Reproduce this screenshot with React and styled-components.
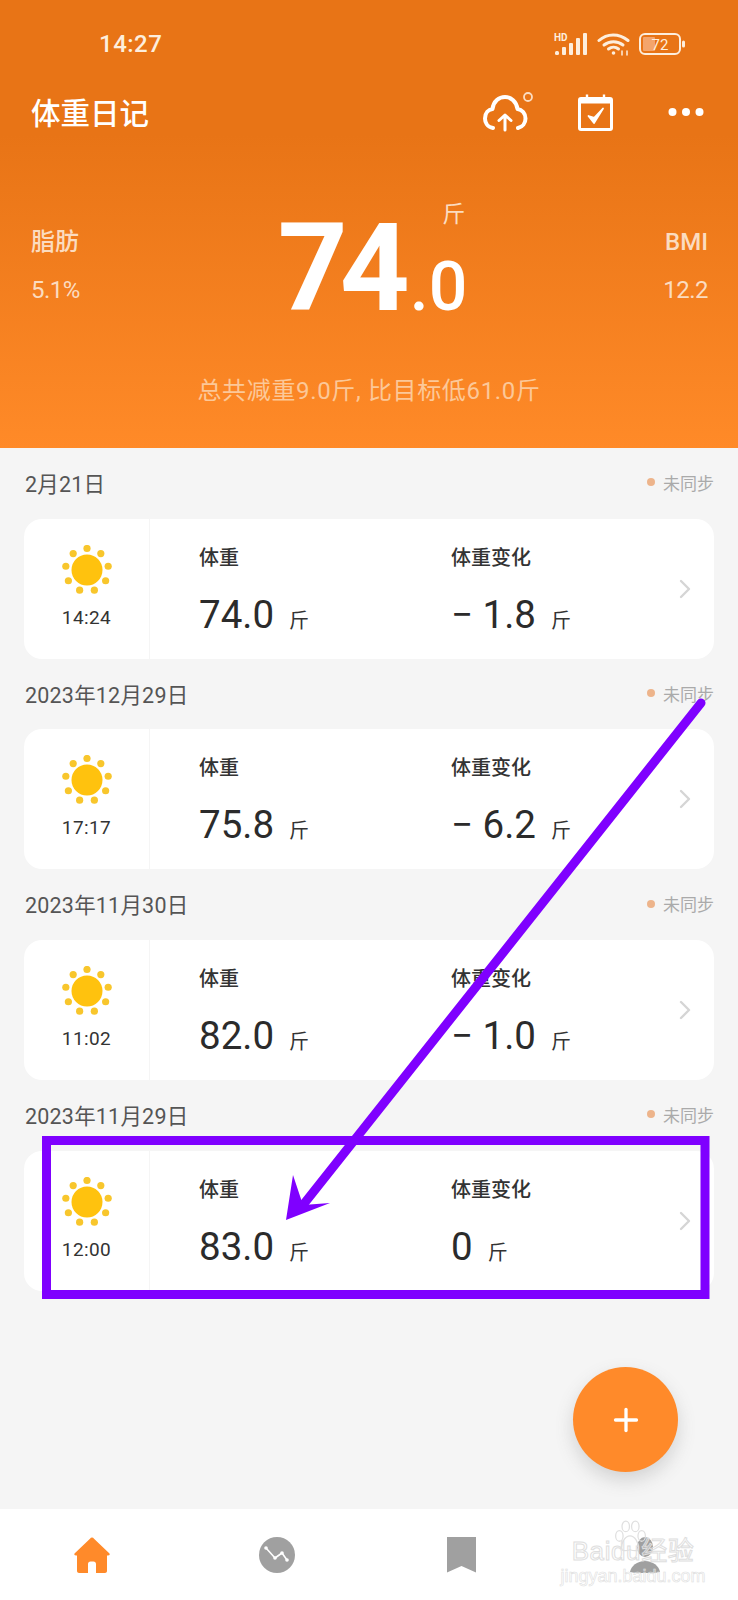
import React from "react";
import styled, { createGlobalStyle } from "styled-components";
import { Plus, ChevronRight } from "lucide-react";

const CJK = `Roboto, "Noto Sans CJK SC", sans-serif`;

const GlobalStyle = createGlobalStyle`
  html, body {
    margin: 0;
    padding: 0;
    background: #f5f5f5;
    font-family: ${CJK};
  }
  * { box-sizing: border-box; }
`;

const Page = styled.div`
  position: relative;
  width: 738px;
  height: 1600px;
  overflow: hidden;
  display: flex;
  flex-direction: column;
  background: #f5f5f5;
`;

/* orange header */
const Header = styled.header`
  height: 448px;
  flex: none;
  display: flex;
  flex-direction: column;
  background: linear-gradient(180deg, #e87416 0%, #e87416 30%, #ff8a28 100%);
  color: #fff;
`;

const StatusBar = styled.div`
  height: 88px;
  display: flex;
  align-items: center;
  justify-content: space-between;
  padding: 0 52px 0 99px;
`;

const Clock = styled.span`
  font-size: 24px;
  font-weight: 500;
  letter-spacing: 0.5px;
  color: #fdeedd;
`;

const StatusIcons = styled.div`
  display: flex;
  align-items: center;
  gap: 9px;
`;

const TopBar = styled.div`
  height: 48px;
  display: flex;
  align-items: center;
  padding: 0 34px 0 31px;
`;

const AppTitle = styled.h1`
  margin: -3px 0 0;
  flex: 1;
  font-size: 29.5px;
  font-weight: 500;
  color: #fff;
`;

const TopIcons = styled.div`
  display: flex;
  align-items: center;
  gap: 45px;
`;

const DotsSvg = styled.svg`
  margin-left: 10px;
`;

const Stats = styled.div`
  height: 204px;
  padding: 66px 30px 0 31px;
  display: flex;
  justify-content: space-between;
  align-items: flex-start;
`;

const SideStat = styled.div`
  padding-top: 26px;
  display: flex;
  flex-direction: column;
  gap: 21px;
  align-items: ${(p) => (p.$right ? "flex-end" : "flex-start")};
  color: #fbdcc0;
`;

const SideLabel = styled.span`
  font-size: 24px;
  line-height: 28px;
  font-weight: 500;
`;

const SideValue = styled.span`
  font-size: 24px;
  line-height: 26px;
  letter-spacing: -0.5px;
`;

const Big = styled.div`
  display: flex;
  flex-direction: column;
  margin-left: 2px;
`;

const BigUnit = styled.span`
  align-self: flex-end;
  margin-right: 2px;
  font-size: 23px;
  line-height: 26px;
  color: #fbdcc0;
`;

const BigNumber = styled.div`
  margin-top: -24px;
  font-size: 122px;
  line-height: 130px;
  font-weight: 700;
  letter-spacing: -8px;
  white-space: nowrap;
`;

const BigDecimal = styled.span`
  font-size: 68px;
  font-weight: 500;
  letter-spacing: 0;
  margin-left: 8px;
`;

const Summary = styled.div`
  text-align: center;
  font-size: 24px;
  line-height: 30px;
  letter-spacing: 0.65px;
  color: #fcc898;
  margin-top: 36px;
`;

/* day list */
const List = styled.main`
  flex: 1;
  padding: 0 24px;
`;

const DateRow = styled.div`
  height: 70.7px;
  padding-bottom: 2px;
  display: flex;
  align-items: center;
  justify-content: space-between;
`;

const DateText = styled.span`
  margin-left: 1px;
  font-size: 21.5px;
  letter-spacing: 0.2px;
  color: #555;
`;

const SyncState = styled.span`
  display: flex;
  align-items: center;
  gap: 8px;
  font-size: 17px;
  color: #aaa;
`;

const SyncDot = styled.i`
  width: 8px;
  height: 8px;
  border-radius: 50%;
  background: #edb48b;
`;

const Card = styled.div`
  position: relative;
  height: 140px;
  display: flex;
  background: #fff;
  border-radius: 18px;
`;

const TimeCell = styled.div`
  width: 126px;
  flex: none;
  padding-top: 26px;
  display: flex;
  flex-direction: column;
  align-items: center;
  border-right: 1px solid #f5f5f5;
`;

const TimeText = styled.span`
  margin-top: 11px;
  font-size: 19px;
  line-height: 24px;
  letter-spacing: 0.4px;
  color: #333;
`;

const Metric = styled.div`
  width: ${(p) => p.$width}px;
  padding: 25px 0 0 ${(p) => p.$inset}px;
`;

const MetricLabel = styled.div`
  font-size: 20px;
  line-height: 28px;
  font-weight: 500;
  color: #333;
`;

const MetricValue = styled.div`
  margin-top: 18px;
  display: flex;
  align-items: baseline;
  font-size: 38.5px;
  line-height: 50px;
  color: #2b2b2b;
`;

const MetricUnit = styled.span`
  margin-left: 15px;
  font-size: 20px;
  color: #333;
`;

const Chevron = styled(ChevronRight)`
  position: absolute;
  right: 13px;
  top: 54px;
  color: #d5d5d5;
`;

/* overlays */
const Fab = styled.button`
  position: absolute;
  left: 573px;
  top: 1367px;
  width: 105px;
  height: 105px;
  border: none;
  border-radius: 50%;
  padding: 0;
  display: flex;
  align-items: center;
  justify-content: center;
  color: #fff;
  background: #ff8a2a;
  box-shadow: 0 8px 18px rgba(90, 90, 90, 0.22);
`;

const Annotation = styled.svg`
  position: absolute;
  left: 0;
  top: 0;
  pointer-events: none;
`;

const BottomNav = styled.nav`
  height: 91px;
  flex: none;
  display: grid;
  grid-template-columns: repeat(4, 1fr);
  align-items: start;
  justify-items: center;
  padding-top: 28px;
  background: #fff;
`;

const Watermark = styled.div`
  position: absolute;
  left: 566px;
  top: 1518px;
  width: 134px;
  display: flex;
  flex-direction: column;
  align-items: center;
  color: rgba(255, 255, 255, 0.25);
  pointer-events: none;
  font-family: "Liberation Sans", "Noto Sans CJK SC", sans-serif;
  -webkit-text-stroke: 1px #dedede;
`;

const WatermarkBrand = styled.span`
  margin-top: 19px;
  font-size: 26px;
  line-height: 28px;
  white-space: nowrap;
  letter-spacing: 0.6px;
`;

const WatermarkUrl = styled.span`
  margin-top: 2px;
  font-size: 18px;
  line-height: 18px;
  white-space: nowrap;
  -webkit-text-stroke: 0.6px #e0e0e0;
`;

const PawMark = styled.svg`
  position: absolute;
  left: 45px;
  top: 2px;
`;

/* drawings */
const Signal = () => (
  <svg width="34" height="24" viewBox="0 0 34 24" fill="#fdeedd">
    <text x="0" y="9" fontSize="10" fontWeight="700" fontFamily="Roboto, sans-serif">HD</text>
    <rect x="1" y="19" width="4" height="4" rx="1.5" />
    <rect x="8" y="15" width="4" height="8" rx="1" />
    <rect x="15" y="11" width="4" height="12" rx="1" />
    <rect x="22" y="6" width="4" height="17" rx="1" />
    <rect x="29" y="1" width="4" height="22" rx="1" />
  </svg>
);

const Wifi = () => (
  <svg width="33" height="24" viewBox="0 0 33 24" fill="none" stroke="#fdeedd" strokeWidth="3" strokeLinecap="round">
    <path d="M2 8.5C10 1 22 1 31 8.5" />
    <path d="M7 13C12.500 8.500 20.500 8.500 26 13" />
    <path d="M11.500 17C14.500 14.500 18.500 14.500 21.500 17" />
    <circle cx="16.500" cy="21" r="1.800" fill="#fdeedd" stroke="none" />
    <path d="M25 23v-4M30 19v4" strokeWidth="1.500" />
  </svg>
);

const Battery = ({ level }) => (
  <svg width="47" height="22" viewBox="0 0 47 22">
    <rect x="1" y="1" width="40" height="20" rx="5" fill="none" stroke="#fdeedd" strokeWidth="2" />
    <rect x="4" y="4" width="12" height="14" rx="1" fill="#f4a56c" />
    <rect x="43" y="7.500" width="3" height="7" rx="1.500" fill="#fdeedd" />
    <text x="21" y="16.500" fontSize="15" textAnchor="middle" fill="#fdeedd" fontFamily="Roboto, sans-serif">{level}</text>
  </svg>
);

const CloudUpload = () => (
  <svg width="50" height="40" viewBox="0 0 50 40" fill="none" stroke="#fff" strokeWidth="4" strokeLinecap="round" strokeLinejoin="round">
    <path d="M10 36C4 35 2 30 2 26.500C2 21 5.500 17.500 9.500 17C10.500 9 16 5 22 5C28 5 33.500 9.500 34.500 17C39 17.500 42.500 21.500 42.500 26.500C42.500 31 39.500 35 35 36" />
    <path d="M22 38V23M16 28.500L22 23L28 28.500" strokeWidth="3" />
    <circle cx="45" cy="5" r="4" stroke="#fbdcc0" strokeWidth="1.800" />
  </svg>
);

const CalendarCheck = () => (
  <svg width="35" height="37" viewBox="0 0 35 37" fill="none">
    <rect x="1.500" y="4.500" width="32" height="31" rx="1.500" stroke="#fff" strokeWidth="3" />
    <rect x="1.500" y="4.500" width="32" height="5" fill="#fff" />
    <path d="M9 0.500v6M26 0.500v6" stroke="#fff" strokeWidth="2.400" />
    <path d="M10.500 22L16 29L25 14.500L16.200 23.800Z" fill="#fff" stroke="#fff" strokeWidth="1.800" strokeLinejoin="round" />
  </svg>
);

const MoreDots = () => (
  <DotsSvg width="36" height="10" viewBox="0 0 36 10" fill="#fff">
    <circle cx="4.500" cy="5" r="4" />
    <circle cx="18" cy="5" r="4" />
    <circle cx="31.500" cy="5" r="4" />
  </DotsSvg>
);

const Sun = () => (
  <svg width="50" height="50" viewBox="0 0 50 50">
    <circle cx="25" cy="25" r="15.500" fill="#ffc20e" />
    {Array.from({ length: 9 }, (_, i) => {
      const a = (i * 40 * Math.PI) / 180;
      return <circle key={i} cx={25 + 21.500 * Math.sin(a)} cy={25 - 21.500 * Math.cos(a)} r="3.600" fill="#f8c62c" />;
    })}
  </svg>
);

const HomeIcon = () => (
  <svg width="36" height="36" viewBox="0 0 36 36" fill="#ff8a2a">
    <path fillRule="evenodd" d="M18 0.500C18.800 0.500 19.500 1 20 1.700L35.500 16.500C36 17.500 35.500 18.500 34 18.500H33V34C33 35 32 36 31 36H5C4 36 3 35 3 34V18.500H2C0.500 18.500 0 17.500 0.500 16.500L16 1.700C16.500 1 17.200 0.500 18 0.500ZM14 36H22V27C22 25.500 21 24.500 19.500 24.500H16.500C15 24.500 14 25.500 14 27Z" />
  </svg>
);

const ChartIcon = () => (
  <svg width="36" height="36" viewBox="0 0 36 36">
    <circle cx="18" cy="18" r="18" fill="#a0a0a0" />
    <path d="M7 11L16 21L23 16L28 23" fill="none" stroke="#fff" strokeWidth="1.600" strokeLinejoin="round" />
    <g fill="#fff">
      <circle cx="7" cy="11" r="1.800" />
      <circle cx="16" cy="21" r="1.800" />
      <circle cx="23" cy="16" r="1.800" />
      <circle cx="28" cy="23" r="1.800" />
    </g>
  </svg>
);

const BookmarkIcon = () => (
  <svg width="29" height="36" viewBox="0 0 29 36" fill="#a0a0a0">
    <path d="M0 0H29V35.500L14.500 29L0 35.500Z" />
  </svg>
);

const PersonIcon = () => (
  <svg width="36" height="36" viewBox="0 0 36 36" fill="#a0a0a0">
    <ellipse cx="17" cy="10" rx="8" ry="10" />
    <path d="M2 35C3 29 9 24 17 24C25 24 31 29 32 35C24 37 10 37 2 35Z" />
  </svg>
);

const entries = [
  { date: "2月21日", time: "14:24", weight: "74.0", change: "− 1.8" },
  { date: "2023年12月29日", time: "17:17", weight: "75.8", change: "− 6.2" },
  { date: "2023年11月30日", time: "11:02", weight: "82.0", change: "− 1.0" },
  { date: "2023年11月29日", time: "12:00", weight: "83.0", change: "0" },
];

const App = () => (
  <Page>
    <GlobalStyle />
    <Header>
      <StatusBar>
        <Clock>14:27</Clock>
        <StatusIcons>
          <Signal />
          <Wifi />
          <Battery level="72" />
        </StatusIcons>
      </StatusBar>
      <TopBar>
        <AppTitle>体重日记</AppTitle>
        <TopIcons>
          <CloudUpload />
          <CalendarCheck />
          <MoreDots />
        </TopIcons>
      </TopBar>
      <Stats>
        <SideStat>
          <SideLabel>脂肪</SideLabel>
          <SideValue>5.1%</SideValue>
        </SideStat>
        <Big>
          <BigUnit>斤</BigUnit>
          <BigNumber>
            74<BigDecimal>.0</BigDecimal>
          </BigNumber>
        </Big>
        <SideStat $right>
          <SideLabel>BMI</SideLabel>
          <SideValue>12.2</SideValue>
        </SideStat>
      </Stats>
      <Summary>总共减重9.0斤, 比目标低61.0斤</Summary>
    </Header>

    <List>
      {entries.map((e) => (
        <section key={e.date}>
          <DateRow>
            <DateText>{e.date}</DateText>
            <SyncState>
              <SyncDot />
              未同步
            </SyncState>
          </DateRow>
          <Card>
            <TimeCell>
              <Sun />
              <TimeText>{e.time}</TimeText>
            </TimeCell>
            <Metric $width={252} $inset={49}>
              <MetricLabel>体重</MetricLabel>
              <MetricValue>
                {e.weight}
                <MetricUnit>斤</MetricUnit>
              </MetricValue>
            </Metric>
            <Metric $width={200} $inset={49}>
              <MetricLabel>体重变化</MetricLabel>
              <MetricValue>
                {e.change}
                <MetricUnit>斤</MetricUnit>
              </MetricValue>
            </Metric>
            <Chevron size={32} strokeWidth={1.800} />
          </Card>
        </section>
      ))}
    </List>

    <BottomNav>
      <HomeIcon />
      <ChartIcon />
      <BookmarkIcon />
      <PersonIcon />
    </BottomNav>

    <Fab aria-label="add">
      <Plus size={36} strokeWidth={2.200} />
    </Fab>

    <Annotation width="738" height="1600" viewBox="0 0 738 1600">
      <rect x="46.500" y="1140.500" width="658.500" height="154" fill="none" stroke="#7f00ff" strokeWidth="9" />
      <path d="M701 703L303 1205" fill="none" stroke="#7f00ff" strokeWidth="9" strokeLinecap="round" />
      <path d="M286 1220L293 1175L303 1205L330 1203Z" fill="#7f00ff" />
    </Annotation>

    <Watermark>
      <PawMark width="38" height="34" viewBox="0 0 30 32" fill="none" stroke="#e0e0e0" strokeWidth="1.200">
        <ellipse cx="5" cy="15" rx="3.500" ry="5" />
        <ellipse cx="11" cy="6" rx="3.500" ry="5" />
        <ellipse cx="20" cy="6" rx="3.500" ry="5" />
        <ellipse cx="26" cy="15" rx="3.500" ry="5" />
        <path d="M15 15C10 15 7 22 7 26C7 30 12 29 15 28C18 29 23 30 23 26C23 22 20 15 15 15Z" />
      </PawMark>
      <WatermarkBrand>Baidu经验</WatermarkBrand>
      <WatermarkUrl>jingyan.baidu.com</WatermarkUrl>
    </Watermark>
  </Page>
);

export default App;
